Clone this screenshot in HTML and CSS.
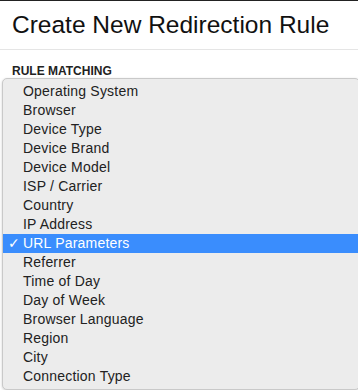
FILE: index.html
```html
<!DOCTYPE html>
<html lang="en">
<head>
    <meta charset="UTF-8" />
    <title>Create New Redirection Rule</title>
    <link rel="stylesheet" href="styles.css">
</head>
<body>
    <div class="modal">
        <div class="modal-header">
            <h1>Create New Redirection Rule</h1>
        </div>
        <div class="modal-body">
            <label class="field-label">RULE MATCHING</label>
            <ul class="dropdown">
                <li>Operating System</li>
                <li>Browser</li>
                <li>Device Type</li>
                <li>Device Brand</li>
                <li>Device Model</li>
                <li>ISP / Carrier</li>
                <li>Country</li>
                <li>IP Address</li>
                <li class="selected"><span class="check">&#10003;</span>URL Parameters</li>
                <li>Referrer</li>
                <li>Time of Day</li>
                <li>Day of Week</li>
                <li>Browser Language</li>
                <li>Region</li>
                <li>City</li>
                <li>Connection Type</li>
            </ul>
        </div>
    </div>
</body>
</html>
```

FILE: styles.css
```css
body {
    margin: 0;
    font-family: "Liberation Sans", Arial, sans-serif;
    background: #fff;
    color: #000;
    overflow: hidden;
}
.modal {
    border-top: 1px solid #222;
}
.modal-header {
    padding: 9px 12px 0;
    height: 39px;
    border-bottom: 1px solid #e5e5e5;
}
h1 {
    margin: 0;
    font-size: 24.5px;
    font-weight: normal;
    line-height: 30px;
    color: #111;
}
.modal-body {
    padding: 15px 0 0 2px;
}
.field-label {
    display: block;
    margin-left: 10px;
    font-size: 12px;
    font-weight: bold;
    line-height: 13px;
    color: #222;
}
.dropdown {
    list-style: none;
    margin: 0;
    padding: 3px 0;
    width: 356px;
    background: #ececec;
    border: 1px solid #c9c9c9;
    border-radius: 5px;
    box-shadow: 0 1px 3px rgba(0, 0, 0, 0.18);
}
.dropdown li {
    position: relative;
    height: 19px;
    line-height: 19px;
    padding-left: 20px;
    font-size: 14px;
    letter-spacing: 0.2px;
    color: #222;
}
.dropdown li.selected {
    background: #3a8dfd;
    color: #fff;
}
.check {
    position: absolute;
    left: 5px;
    top: 0;
    font-family: "DejaVu Sans", sans-serif;
    font-size: 14px;
    font-weight: bold;
}
```
